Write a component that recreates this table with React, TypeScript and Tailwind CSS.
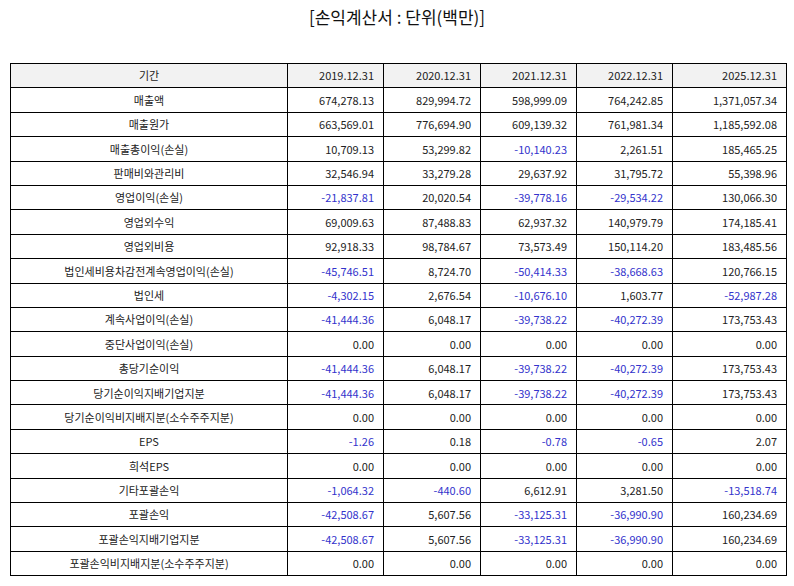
const periods = ["2019.12.31", "2020.12.31", "2021.12.31", "2022.12.31", "2025.12.31"];

const zeros = ["0.00", "0.00", "0.00", "0.00", "0.00"];
const netIncome = ["-41,444.36", "6,048.17", "-39,738.22", "-40,272.39", "173,753.43"];
const compIncome = ["-42,508.67", "5,607.56", "-33,125.31", "-36,990.90", "160,234.69"];

const rows: [string, string[]][] = [
  ["매출액", ["674,278.13", "829,994.72", "598,999.09", "764,242.85", "1,371,057.34"]],
  ["매출원가", ["663,569.01", "776,694.90", "609,139.32", "761,981.34", "1,185,592.08"]],
  ["매출총이익(손실)", ["10,709.13", "53,299.82", "-10,140.23", "2,261.51", "185,465.25"]],
  ["판매비와관리비", ["32,546.94", "33,279.28", "29,637.92", "31,795.72", "55,398.96"]],
  ["영업이익(손실)", ["-21,837.81", "20,020.54", "-39,778.16", "-29,534.22", "130,066.30"]],
  ["영업외수익", ["69,009.63", "87,488.83", "62,937.32", "140,979.79", "174,185.41"]],
  ["영업외비용", ["92,918.33", "98,784.67", "73,573.49", "150,114.20", "183,485.56"]],
  ["법인세비용차감전계속영업이익(손실)", ["-45,746.51", "8,724.70", "-50,414.33", "-38,668.63", "120,766.15"]],
  ["법인세", ["-4,302.15", "2,676.54", "-10,676.10", "1,603.77", "-52,987.28"]],
  ["계속사업이익(손실)", netIncome],
  ["중단사업이익(손실)", zeros],
  ["총당기순이익", netIncome],
  ["당기순이익지배기업지분", netIncome],
  ["당기순이익비지배지분(소수주주지분)", zeros],
  ["EPS", ["-1.26", "0.18", "-0.78", "-0.65", "2.07"]],
  ["희석EPS", zeros],
  ["기타포괄손익", ["-1,064.32", "-440.60", "6,612.91", "3,281.50", "-13,518.74"]],
  ["포괄손익", compIncome],
  ["포괄손익지배기업지분", compIncome],
  ["포괄손익비지배지분(소수주주지분)", zeros],
];

const widths = ["w-[277px]", "w-[96px]", "w-[97px]", "w-[96px]", "w-[96px]", "w-[114px]"];

export default function App() {
  return (
    <div className="w-[794px] h-[586px] bg-white px-[10px] font-['Noto_Sans_CJK_KR','Noto_Sans',sans-serif] text-[#222]">
      {/* title */}
      <h1 className="text-center text-[17px] leading-[24px] pt-[5px] h-[63px] font-normal text-[#111]">
        [손익계산서 : 단위(백만)]
      </h1>

      <table className="w-[776px] table-fixed border-collapse text-[11px]">
        <colgroup>
          {widths.map((w, i) => (
            <col key={i} className={w} />
          ))}
        </colgroup>
        <thead>
          <tr className="h-[24.4px] bg-[#f2f2f2]">
            <th className="border border-black font-normal text-center p-0">기간</th>
            {periods.map((p) => (
              <th key={p} className="border border-black font-normal text-right pr-[9px] p-0">
                {p}
              </th>
            ))}
          </tr>
        </thead>
        <tbody>
          {rows.map(([label, values]) => (
            <tr key={label} className="h-[24.4px]">
              <td className="border border-black text-center p-0">{label}</td>
              {values.map((v, i) => (
                <td
                  key={i}
                  className={`border border-black text-right pr-[9px] p-0 ${
                    v.startsWith("-") ? "text-[#3333cc]" : ""
                  }`}
                >
                  {v}
                </td>
              ))}
            </tr>
          ))}
        </tbody>
      </table>
    </div>
  );
}
